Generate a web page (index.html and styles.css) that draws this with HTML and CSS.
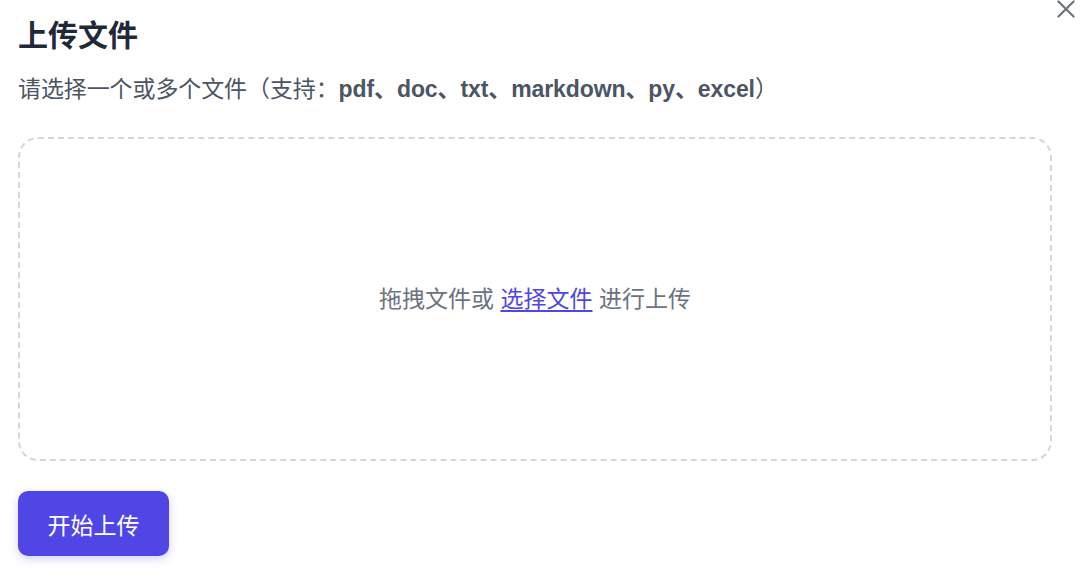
FILE: index.html
```html
<!DOCTYPE html>
<html lang="zh">
<head>
<meta charset="utf-8">
<link rel="stylesheet" href="styles.css">
</head>
<body>
<div class="dialog">
  <button class="close" aria-label="关闭">
    <svg width="26" height="26" viewBox="0 0 24 24" fill="none" stroke="#6b7280" stroke-width="2" stroke-linecap="round"><path d="M5 5L19 19M19 5L5 19"/></svg>
  </button>
  <h1 class="title">上传文件</h1>
  <p class="subtitle">请选择一个或多个文件（支持：<span class="ext">pdf、doc、txt、markdown、py、excel</span>）</p>
  <div class="dropzone">
    <span class="drop-text">拖拽文件或 <a class="pick" href="#">选择文件</a> 进行上传</span>
  </div>
  <button class="submit">开始上传</button>
</div>
</body>
</html>
```
FILE: styles.css
```css
html, body { margin: 0; padding: 0; background: #fff; }
body { font-family: "Liberation Sans", "Noto Sans CJK SC", sans-serif; }
.dialog {
  position: relative;
  width: 1080px;
  height: 584px;
  box-sizing: border-box;
  padding: 17px 28px 0 18px;
  display: flex;
  flex-direction: column;
  align-items: flex-start;
}
.close {
  position: absolute;
  top: -4px;
  right: 1px;
  border: 0;
  background: none;
  padding: 0;
  width: 26px;
  height: 26px;
}
.close svg { display: block; }
.title {
  margin: 0;
  font-size: 30px;
  line-height: 38px;
  font-weight: 700;
  color: #1f2937;
}
.subtitle {
  margin: 19px 0 0;
  font-size: 23px;
  line-height: 30px;
  font-weight: 400;
  color: #4b5563;
  letter-spacing: -0.1px;
}
.ext { font-weight: 700; }
.dropzone {
  margin-top: 33px;
  align-self: stretch;
  height: 324px;
  box-sizing: border-box;
  border: 2px dashed #d4d6db;
  border-radius: 20px;
  display: flex;
  align-items: center;
  justify-content: center;
}
.drop-text {
  font-size: 23px;
  line-height: 30px;
  color: #6b7280;
}
.pick { color: #4f46e5; text-decoration: underline; text-underline-offset: 3px; }
.submit {
  margin-top: 30px;
  width: 151px;
  height: 65px;
  border: 0;
  border-radius: 10px;
  background: #4f46e5;
  color: #fff;
  font-family: "Liberation Sans", "Noto Sans CJK SC", sans-serif;
  font-size: 23px;
  box-shadow: 0 3px 8px rgba(79, 70, 229, 0.25);
}
```
